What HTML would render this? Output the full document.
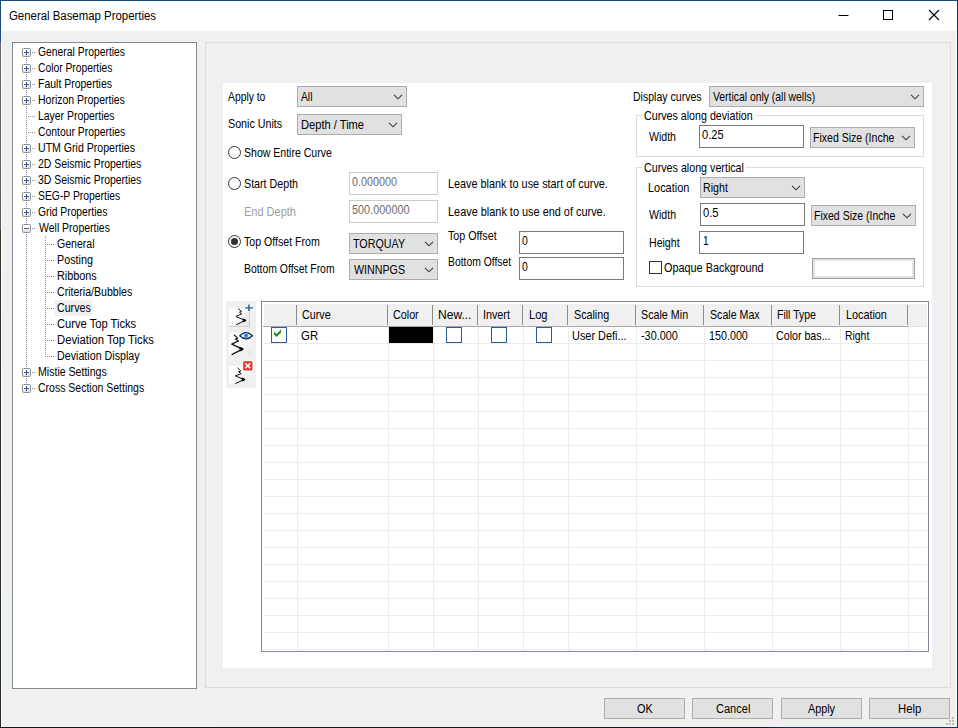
<!DOCTYPE html><html><head><meta charset="utf-8"><title>General Basemap Properties</title><style>
*{box-sizing:border-box;margin:0;padding:0}
html,body{width:958px;height:728px;overflow:hidden;background:#f0f0f0}
body{position:relative;font-family:"Liberation Sans",sans-serif;color:#000;font-size:13px}
.a{position:absolute}
.t{position:absolute;white-space:nowrap;transform-origin:0 50%;line-height:16px;height:16px}
.dd{position:absolute;background:#e1e1e1;border:1px solid #adadad}
.tb{position:absolute;background:#fff;border:1px solid #7a7a7a}
.tbd{position:absolute;background:#fff;border:1px solid #cccccc}
.btn{position:absolute;background:#e1e1e1;border:1px solid #adadad}
.grp{position:absolute;border:1px solid #dcdcdc}
.rad{position:absolute;width:13px;height:13px;border:1px solid #333;border-radius:50%;background:#fff}
.cb{position:absolute;border:1px solid #333;background:#fff}
.pm{position:absolute;width:9px;height:9px;border:1px solid #8e8e8e;border-radius:1.5px;background:linear-gradient(#fff,#fff 50%,#d8d8d8)}
.pm i{position:absolute;left:1px;top:3px;width:5px;height:1px;background:#3c50a0}
.pm b{position:absolute;left:3px;top:1px;width:1px;height:5px;background:#3c50a0}
.hv{position:absolute;top:305px;width:1px;height:20px;background:#8c8c8c}
.gc{position:absolute;width:16px;height:16px;top:327px;background:#fff;border:1px solid #2b5c9e}
</style></head><body>
<div class="a" style="left:0px;top:0px;width:958px;height:31px;background:#fff"></div>
<div class="a" style="left:0px;top:0px;width:958px;height:1px;background:#1b4b70"></div>
<div class="a" style="left:0px;top:0px;width:1px;height:728px;background:linear-gradient(#1b4a7a 0,#1b4a7a 42px,#6a6a6a 42px,#5a5a5a 230px,#303830 231px,#1c2a24 100%)"></div>
<div class="a" style="left:1px;top:31px;width:1px;height:696px;background:#fff"></div>
<div class="a" style="left:956px;top:1px;width:1px;height:726px;background:#fff"></div>
<div class="a" style="left:957px;top:0px;width:1px;height:728px;background:#16305c"></div>
<div class="a" style="left:0px;top:727px;width:958px;height:1px;background:linear-gradient(90deg,#14141c 0,#1a1424 80%,#16305c 82%)"></div>
<div class="t" style="left:8.93px;top:8px;font-size:12px;transform:scaleX(0.9500);">General Basemap Properties</div>
<svg class="a" style="left:830px;top:1px" width="126" height="30" viewBox="0 0 126 30"><path d="M8.5 14.5h10" stroke="#000" stroke-width="1" fill="none"/><rect x="53.5" y="9.5" width="9" height="9" stroke="#000" stroke-width="1" fill="none"/><path d="M99 9l10 10M109 9l-10 10" stroke="#000" stroke-width="1.1" fill="none"/></svg>
<div class="a" style="left:12px;top:42px;width:185px;height:647px;background:#fff;border:1px solid #828790"></div>
<div class="a" style="left:26px;top:52px;width:1px;height:337px;background-image:linear-gradient(#909090 50%,transparent 50%);background-size:1px 2px"></div>
<div class="a" style="left:45px;top:236px;width:1px;height:121px;background-image:linear-gradient(#909090 50%,transparent 50%);background-size:1px 2px"></div>
<div class="a" style="left:32px;top:52px;width:3px;height:1px;background-image:linear-gradient(90deg,#909090 50%,transparent 50%);background-size:2px 1px"></div>
<div class="pm" style="left:22px;top:48px;width:9px;height:9px;"><i></i><b></b></div>
<div class="t" style="left:38.17px;top:44px;font-size:12px;transform:scaleX(0.8642);">General Properties</div>
<div class="a" style="left:32px;top:68px;width:3px;height:1px;background-image:linear-gradient(90deg,#909090 50%,transparent 50%);background-size:2px 1px"></div>
<div class="pm" style="left:22px;top:64px;width:9px;height:9px;"><i></i><b></b></div>
<div class="t" style="left:38.17px;top:60px;font-size:12px;transform:scaleX(0.8571);">Color Properties</div>
<div class="a" style="left:32px;top:84px;width:3px;height:1px;background-image:linear-gradient(90deg,#909090 50%,transparent 50%);background-size:2px 1px"></div>
<div class="pm" style="left:22px;top:80px;width:9px;height:9px;"><i></i><b></b></div>
<div class="t" style="left:37.73px;top:76px;font-size:12px;transform:scaleX(0.8733);">Fault Properties</div>
<div class="a" style="left:32px;top:100px;width:3px;height:1px;background-image:linear-gradient(90deg,#909090 50%,transparent 50%);background-size:2px 1px"></div>
<div class="pm" style="left:22px;top:96px;width:9px;height:9px;"><i></i><b></b></div>
<div class="t" style="left:37.73px;top:92px;font-size:12px;transform:scaleX(0.8735);">Horizon Properties</div>
<div class="a" style="left:28px;top:116px;width:7px;height:1px;background-image:linear-gradient(90deg,#909090 50%,transparent 50%);background-size:2px 1px"></div>
<div class="t" style="left:37.73px;top:108px;font-size:12px;transform:scaleX(0.8692);">Layer Properties</div>
<div class="a" style="left:28px;top:132px;width:7px;height:1px;background-image:linear-gradient(90deg,#909090 50%,transparent 50%);background-size:2px 1px"></div>
<div class="t" style="left:38.17px;top:124px;font-size:12px;transform:scaleX(0.8662);">Contour Properties</div>
<div class="a" style="left:32px;top:148px;width:3px;height:1px;background-image:linear-gradient(90deg,#909090 50%,transparent 50%);background-size:2px 1px"></div>
<div class="pm" style="left:22px;top:144px;width:9px;height:9px;"><i></i><b></b></div>
<div class="t" style="left:37.72px;top:140px;font-size:12px;transform:scaleX(0.8811);">UTM Grid Properties</div>
<div class="a" style="left:32px;top:164px;width:3px;height:1px;background-image:linear-gradient(90deg,#909090 50%,transparent 50%);background-size:2px 1px"></div>
<div class="pm" style="left:22px;top:160px;width:9px;height:9px;"><i></i><b></b></div>
<div class="t" style="left:38.16px;top:156px;font-size:12px;transform:scaleX(0.8705);">2D Seismic Properties</div>
<div class="a" style="left:32px;top:180px;width:3px;height:1px;background-image:linear-gradient(90deg,#909090 50%,transparent 50%);background-size:2px 1px"></div>
<div class="pm" style="left:22px;top:176px;width:9px;height:9px;"><i></i><b></b></div>
<div class="t" style="left:38.16px;top:172px;font-size:12px;transform:scaleX(0.8705);">3D Seismic Properties</div>
<div class="a" style="left:32px;top:196px;width:3px;height:1px;background-image:linear-gradient(90deg,#909090 50%,transparent 50%);background-size:2px 1px"></div>
<div class="pm" style="left:22px;top:192px;width:9px;height:9px;"><i></i><b></b></div>
<div class="t" style="left:38.17px;top:188px;font-size:12px;transform:scaleX(0.8637);">SEG-P Properties</div>
<div class="a" style="left:32px;top:212px;width:3px;height:1px;background-image:linear-gradient(90deg,#909090 50%,transparent 50%);background-size:2px 1px"></div>
<div class="pm" style="left:22px;top:208px;width:9px;height:9px;"><i></i><b></b></div>
<div class="t" style="left:38.17px;top:204px;font-size:12px;transform:scaleX(0.8589);">Grid Properties</div>
<div class="a" style="left:32px;top:228px;width:3px;height:1px;background-image:linear-gradient(90deg,#909090 50%,transparent 50%);background-size:2px 1px"></div>
<div class="pm" style="left:22px;top:224px;width:9px;height:9px;"><i></i></div>
<div class="t" style="left:38.60px;top:220px;font-size:12px;transform:scaleX(0.8743);">Well Properties</div>
<div class="a" style="left:47px;top:244px;width:7px;height:1px;background-image:linear-gradient(90deg,#909090 50%,transparent 50%);background-size:2px 1px"></div>
<div class="t" style="left:57.16px;top:236px;font-size:12px;transform:scaleX(0.8795);">General</div>
<div class="a" style="left:47px;top:260px;width:7px;height:1px;background-image:linear-gradient(90deg,#909090 50%,transparent 50%);background-size:2px 1px"></div>
<div class="t" style="left:56.70px;top:252px;font-size:12px;transform:scaleX(0.8993);">Posting</div>
<div class="a" style="left:47px;top:276px;width:7px;height:1px;background-image:linear-gradient(90deg,#909090 50%,transparent 50%);background-size:2px 1px"></div>
<div class="t" style="left:56.70px;top:268px;font-size:12px;transform:scaleX(0.9035);">Ribbons</div>
<div class="a" style="left:47px;top:292px;width:7px;height:1px;background-image:linear-gradient(90deg,#909090 50%,transparent 50%);background-size:2px 1px"></div>
<div class="t" style="left:57.16px;top:284px;font-size:12px;transform:scaleX(0.8817);">Criteria/Bubbles</div>
<div class="a" style="left:47px;top:308px;width:7px;height:1px;background-image:linear-gradient(90deg,#909090 50%,transparent 50%);background-size:2px 1px"></div>
<div class="a" style="left:55px;top:300px;width:37px;height:16px;background:#f0f0f0"></div>
<div class="t" style="left:57.16px;top:300px;font-size:12px;transform:scaleX(0.8865);">Curves</div>
<div class="a" style="left:47px;top:324px;width:7px;height:1px;background-image:linear-gradient(90deg,#909090 50%,transparent 50%);background-size:2px 1px"></div>
<div class="t" style="left:57.14px;top:316px;font-size:12px;transform:scaleX(0.9294);">Curve Top Ticks</div>
<div class="a" style="left:47px;top:340px;width:7px;height:1px;background-image:linear-gradient(90deg,#909090 50%,transparent 50%);background-size:2px 1px"></div>
<div class="t" style="left:56.66px;top:332px;font-size:12px;transform:scaleX(0.9396);">Deviation Top Ticks</div>
<div class="a" style="left:47px;top:356px;width:7px;height:1px;background-image:linear-gradient(90deg,#909090 50%,transparent 50%);background-size:2px 1px"></div>
<div class="t" style="left:56.71px;top:348px;font-size:12px;transform:scaleX(0.8918);">Deviation Display</div>
<div class="a" style="left:32px;top:372px;width:3px;height:1px;background-image:linear-gradient(90deg,#909090 50%,transparent 50%);background-size:2px 1px"></div>
<div class="pm" style="left:22px;top:368px;width:9px;height:9px;"><i></i><b></b></div>
<div class="t" style="left:37.72px;top:364px;font-size:12px;transform:scaleX(0.8810);">Mistie Settings</div>
<div class="a" style="left:32px;top:388px;width:3px;height:1px;background-image:linear-gradient(90deg,#909090 50%,transparent 50%);background-size:2px 1px"></div>
<div class="pm" style="left:22px;top:384px;width:9px;height:9px;"><i></i><b></b></div>
<div class="t" style="left:38.16px;top:380px;font-size:12px;transform:scaleX(0.8747);">Cross Section Settings</div>
<div class="grp" style="left:205px;top:42px;width:746px;height:646px;"></div>
<div class="a" style="left:223px;top:83px;width:709px;height:585px;background:#fff"></div>
<div class="t" style="left:227.90px;top:89px;font-size:13px;transform:scaleX(0.7957);">Apply to</div>
<div class="dd" style="left:297px;top:86px;width:110px;height:21px;"></div>
<div class="t" style="left:301.40px;top:89px;font-size:13px;transform:scaleX(0.7900);">All</div>
<svg class="a" style="left:393px;top:94px" width="10" height="6" viewBox="0 0 10 6"><path d="M1 .9L5 4.8L9 .9" stroke="#3a3a3a" stroke-width="1.1" fill="none"/></svg>
<div class="t" style="left:227.68px;top:116px;font-size:13px;transform:scaleX(0.8233);">Sonic Units</div>
<div class="dd" style="left:297px;top:114px;width:105px;height:21px;"></div>
<div class="t" style="left:300.54px;top:117px;font-size:13px;transform:scaleX(0.8556);">Depth / Time</div>
<svg class="a" style="left:388px;top:122px" width="10" height="6" viewBox="0 0 10 6"><path d="M1 .9L5 4.8L9 .9" stroke="#3a3a3a" stroke-width="1.1" fill="none"/></svg>
<div class="rad" style="left:228px;top:146px;width:13px;height:13px;"></div>
<div class="t" style="left:243.79px;top:145px;font-size:13px;transform:scaleX(0.8103);">Show Entire Curve</div>
<div class="rad" style="left:228px;top:177px;width:13px;height:13px;"></div>
<div class="t" style="left:243.78px;top:176px;font-size:13px;transform:scaleX(0.8218);">Start Depth</div>
<div class="tbd" style="left:349px;top:172px;width:89px;height:23px;"></div>
<div class="t" style="left:351.88px;top:174px;font-size:13px;transform:scaleX(0.8319);color:#6d6d6d;">0.000000</div>
<div class="t" style="left:243.55px;top:204px;font-size:13px;transform:scaleX(0.8454);color:#a0a0a0;">End Depth</div>
<div class="tbd" style="left:349px;top:200px;width:89px;height:23px;"></div>
<div class="t" style="left:351.88px;top:202px;font-size:13px;transform:scaleX(0.8384);color:#6d6d6d;">500.000000</div>
<div class="t" style="left:447.57px;top:176px;font-size:13px;transform:scaleX(0.8349);">Leave blank to use start of curve.</div>
<div class="t" style="left:447.56px;top:204px;font-size:13px;transform:scaleX(0.8393);">Leave blank to use end of curve.</div>
<div class="rad" style="left:228px;top:235px;width:13px;height:13px;"><div class="a" style="left:2px;top:2px;width:7px;height:7px;border-radius:50%;background:#333"></div></div>
<div class="t" style="left:244.20px;top:234px;font-size:13px;transform:scaleX(0.8153);">Top Offset From</div>
<div class="dd" style="left:349px;top:233px;width:89px;height:21px;"></div>
<div class="t" style="left:353.39px;top:236px;font-size:13px;transform:scaleX(0.8256);">TORQUAY</div>
<svg class="a" style="left:424px;top:241px" width="10" height="6" viewBox="0 0 10 6"><path d="M1 .9L5 4.8L9 .9" stroke="#3a3a3a" stroke-width="1.1" fill="none"/></svg>
<div class="t" style="left:243.60px;top:261px;font-size:13px;transform:scaleX(0.8000);">Bottom Offset From</div>
<div class="dd" style="left:349px;top:259px;width:89px;height:21px;"></div>
<div class="t" style="left:353.60px;top:262px;font-size:13px;transform:scaleX(0.8211);">WINNPGS</div>
<svg class="a" style="left:424px;top:267px" width="10" height="6" viewBox="0 0 10 6"><path d="M1 .9L5 4.8L9 .9" stroke="#3a3a3a" stroke-width="1.1" fill="none"/></svg>
<div class="t" style="left:448.19px;top:228px;font-size:13px;transform:scaleX(0.8238);">Top Offset</div>
<div class="tb" style="left:519px;top:231px;width:105px;height:23px;"></div>
<div class="t" style="left:522.10px;top:233px;font-size:13px;transform:scaleX(0.8000);">0</div>
<div class="t" style="left:447.60px;top:254px;font-size:13px;transform:scaleX(0.7974);">Bottom Offset</div>
<div class="tb" style="left:519px;top:257px;width:105px;height:23px;"></div>
<div class="t" style="left:522.10px;top:259px;font-size:13px;transform:scaleX(0.8000);">0</div>
<div class="t" style="left:632.79px;top:89px;font-size:13px;transform:scaleX(0.8120);">Display curves</div>
<div class="dd" style="left:709px;top:86px;width:215px;height:21px;"></div>
<div class="t" style="left:713.10px;top:89px;font-size:13px;transform:scaleX(0.7984);">Vertical only (all wells)</div>
<svg class="a" style="left:910px;top:94px" width="10" height="6" viewBox="0 0 10 6"><path d="M1 .9L5 4.8L9 .9" stroke="#3a3a3a" stroke-width="1.1" fill="none"/></svg>
<div class="grp" style="left:636px;top:115px;width:288px;height:42px;"></div>
<div class="a" style="left:642px;top:108px;width:113px;height:16px;background:#fff"></div>
<div class="t" style="left:643.98px;top:108px;font-size:13px;transform:scaleX(0.8214);">Curves along deviation</div>
<div class="t" style="left:648.60px;top:129px;font-size:13px;transform:scaleX(0.8123);">Width</div>
<div class="tb" style="left:699px;top:125px;width:105px;height:23px;"></div>
<div class="t" style="left:701.57px;top:127px;font-size:13px;transform:scaleX(0.8536);">0.25</div>
<div class="dd" style="left:810px;top:127px;width:105px;height:21px;"></div>
<div class="t" style="left:813.29px;top:130px;font-size:13px;transform:scaleX(0.8101);">Fixed Size (Inche</div>
<svg class="a" style="left:901px;top:135px" width="10" height="6" viewBox="0 0 10 6"><path d="M1 .9L5 4.8L9 .9" stroke="#3a3a3a" stroke-width="1.1" fill="none"/></svg>
<div class="grp" style="left:636px;top:167px;width:288px;height:120px;"></div>
<div class="a" style="left:642px;top:160px;width:104px;height:16px;background:#fff"></div>
<div class="t" style="left:643.98px;top:160px;font-size:13px;transform:scaleX(0.8234);">Curves along vertical</div>
<div class="t" style="left:648.36px;top:180px;font-size:13px;transform:scaleX(0.8402);">Location</div>
<div class="dd" style="left:700px;top:177px;width:105px;height:21px;"></div>
<div class="t" style="left:703.18px;top:180px;font-size:13px;transform:scaleX(0.8205);">Right</div>
<svg class="a" style="left:791px;top:185px" width="10" height="6" viewBox="0 0 10 6"><path d="M1 .9L5 4.8L9 .9" stroke="#3a3a3a" stroke-width="1.1" fill="none"/></svg>
<div class="t" style="left:649.40px;top:207px;font-size:13px;transform:scaleX(0.8154);">Width</div>
<div class="tb" style="left:700px;top:203px;width:105px;height:23px;"></div>
<div class="t" style="left:702.57px;top:205px;font-size:13px;transform:scaleX(0.8647);">0.5</div>
<div class="dd" style="left:811px;top:205px;width:105px;height:21px;"></div>
<div class="t" style="left:814.39px;top:208px;font-size:13px;transform:scaleX(0.8091);">Fixed Size (Inche</div>
<svg class="a" style="left:902px;top:213px" width="10" height="6" viewBox="0 0 10 6"><path d="M1 .9L5 4.8L9 .9" stroke="#3a3a3a" stroke-width="1.1" fill="none"/></svg>
<div class="t" style="left:648.59px;top:235px;font-size:13px;transform:scaleX(0.8137);">Height</div>
<div class="tb" style="left:699px;top:231px;width:105px;height:23px;"></div>
<div class="t" style="left:702.71px;top:233px;font-size:13px;transform:scaleX(0.7900);">1</div>
<div class="cb" style="left:649px;top:261px;width:13px;height:13px;"></div>
<div class="t" style="left:663.98px;top:260px;font-size:13px;transform:scaleX(0.8356);">Opaque Background</div>
<div class="a" style="left:812px;top:258px;width:103px;height:21px;background:#fff;border:1px solid #a0a0a0;box-shadow:inset 0 0 0 2px #e3e3e3"></div>
<div class="a" style="left:226px;top:301px;width:30px;height:87px;background:#f0f0f0"></div>
<div class="a" style="left:229.3px;top:307.6px;width:20.4px;height:19.1px;background:linear-gradient(135deg,#ffffff 35%,#e4e4e4);border-right:1px solid #d0d0d0;border-bottom:1px solid #d0d0d0"></div>
<div class="a" style="left:229.4px;top:333.3px;width:22.7px;height:21.7px;background:linear-gradient(135deg,#ffffff 35%,#e8e8e8)"></div>
<div class="a" style="left:229.4px;top:366.3px;width:18.6px;height:17.7px;background:linear-gradient(135deg,#ffffff 35%,#e8e8e8)"></div>
<svg class="a" style="left:226px;top:301px" width="30" height="87" viewBox="226 301 30 87"><path d="M238.2 308.5L241.5 311.5L239.5 312.2L241.8 313.8L235.9 316.5L245.4 320.4L236.2 324.7" stroke="#111" stroke-width="1" fill="none" stroke-linejoin="round"/><path d="M242.6 319.2L245.4 320.4L242.8 321.6" stroke="#000" stroke-width="1.7" fill="none" stroke-linejoin="round"/><path d="M234 334.6L237.6 338.2L235.3 339.1L238.5 341L231.7 344.1L242.6 349.1L231.7 354.6" stroke="#111" stroke-width="1.2" fill="none" stroke-linejoin="round"/><path d="M239.4 347.6L242.6 349.1L239.6 350.6" stroke="#000" stroke-width="2" fill="none" stroke-linejoin="round"/><path d="M237.4 367.7L240.8 370.9L238.5 371.8L241.2 373.6L235.3 375.9L244.4 379.5L235.3 383.6" stroke="#111" stroke-width="1" fill="none" stroke-linejoin="round"/><path d="M241.8 378.4L244.4 379.5L241.9 380.6" stroke="#000" stroke-width="1.7" fill="none" stroke-linejoin="round"/><path d="M245.2 307.9H252.9M248.9 304.5V310.9" stroke="#2f5f7f" stroke-width="1.4" fill="none"/><path d="M239.8 335.7Q246.1 329.4 252.4 335.7Q246.1 342 239.8 335.7Z" fill="#fff" stroke="#12294a" stroke-width="1.25"/><circle cx="246.1" cy="335.7" r="2.3" fill="#3399ff"/><circle cx="246.1" cy="335.7" r="0.8" fill="#1a4f9a"/><rect x="243.2" y="361.2" width="9.2" height="9.2" rx="1" fill="#d93a30"/><path d="M245.3 363.3L250.3 368.3M250.3 363.3L245.3 368.3" stroke="#fff" stroke-width="1.6" fill="none"/></svg>
<div class="a" style="left:261px;top:301px;width:668px;height:351px;background:#fff;border:1px solid #7f8796"></div>
<div class="a" style="left:263px;top:343px;width:664px;height:1px;background:#ececec"></div>
<div class="a" style="left:263px;top:360px;width:664px;height:1px;background:#ececec"></div>
<div class="a" style="left:263px;top:377px;width:664px;height:1px;background:#ececec"></div>
<div class="a" style="left:263px;top:394px;width:664px;height:1px;background:#ececec"></div>
<div class="a" style="left:263px;top:411px;width:664px;height:1px;background:#ececec"></div>
<div class="a" style="left:263px;top:428px;width:664px;height:1px;background:#ececec"></div>
<div class="a" style="left:263px;top:445px;width:664px;height:1px;background:#ececec"></div>
<div class="a" style="left:263px;top:462px;width:664px;height:1px;background:#ececec"></div>
<div class="a" style="left:263px;top:479px;width:664px;height:1px;background:#ececec"></div>
<div class="a" style="left:263px;top:496px;width:664px;height:1px;background:#ececec"></div>
<div class="a" style="left:263px;top:513px;width:664px;height:1px;background:#ececec"></div>
<div class="a" style="left:263px;top:530px;width:664px;height:1px;background:#ececec"></div>
<div class="a" style="left:263px;top:547px;width:664px;height:1px;background:#ececec"></div>
<div class="a" style="left:263px;top:564px;width:664px;height:1px;background:#ececec"></div>
<div class="a" style="left:263px;top:581px;width:664px;height:1px;background:#ececec"></div>
<div class="a" style="left:263px;top:598px;width:664px;height:1px;background:#ececec"></div>
<div class="a" style="left:263px;top:615px;width:664px;height:1px;background:#ececec"></div>
<div class="a" style="left:263px;top:632px;width:664px;height:1px;background:#ececec"></div>
<div class="a" style="left:263px;top:649px;width:664px;height:1px;background:#ececec"></div>
<div class="a" style="left:297px;top:327px;width:1px;height:324px;background:#ececec"></div>
<div class="a" style="left:388px;top:327px;width:1px;height:324px;background:#ececec"></div>
<div class="a" style="left:433px;top:327px;width:1px;height:324px;background:#ececec"></div>
<div class="a" style="left:478px;top:327px;width:1px;height:324px;background:#ececec"></div>
<div class="a" style="left:523px;top:327px;width:1px;height:324px;background:#ececec"></div>
<div class="a" style="left:568px;top:327px;width:1px;height:324px;background:#ececec"></div>
<div class="a" style="left:636px;top:327px;width:1px;height:324px;background:#ececec"></div>
<div class="a" style="left:704px;top:327px;width:1px;height:324px;background:#ececec"></div>
<div class="a" style="left:772px;top:327px;width:1px;height:324px;background:#ececec"></div>
<div class="a" style="left:840px;top:327px;width:1px;height:324px;background:#ececec"></div>
<div class="a" style="left:908px;top:327px;width:1px;height:324px;background:#ececec"></div>
<div class="a" style="left:264px;top:304px;width:663px;height:22px;background:#f0f0f0"></div>
<div class="a" style="left:263px;top:326px;width:645px;height:1px;background:#a8a8a8"></div>
<div class="a" style="left:908px;top:326px;width:19px;height:1px;background:#e0e0e0"></div>
<div class="hv" style="left:296px"></div>
<div class="hv" style="left:387px"></div>
<div class="hv" style="left:432px"></div>
<div class="hv" style="left:477px"></div>
<div class="hv" style="left:522px"></div>
<div class="hv" style="left:567px"></div>
<div class="hv" style="left:635px"></div>
<div class="hv" style="left:703px"></div>
<div class="hv" style="left:771px"></div>
<div class="hv" style="left:839px"></div>
<div class="hv" style="left:907px"></div>
<div class="t" style="left:302.08px;top:307px;font-size:13px;transform:scaleX(0.8271);">Curve</div>
<div class="t" style="left:392.88px;top:307px;font-size:13px;transform:scaleX(0.8267);">Color</div>
<div class="t" style="left:438.37px;top:307px;font-size:13px;transform:scaleX(0.9265);">New...</div>
<div class="t" style="left:482.96px;top:307px;font-size:13px;transform:scaleX(0.8288);">Invert</div>
<div class="t" style="left:528.55px;top:307px;font-size:13px;transform:scaleX(0.8506);">Log</div>
<div class="t" style="left:573.68px;top:307px;font-size:13px;transform:scaleX(0.8244);">Scaling</div>
<div class="t" style="left:641.38px;top:307px;font-size:13px;transform:scaleX(0.8252);">Scale Min</div>
<div class="t" style="left:709.69px;top:307px;font-size:13px;transform:scaleX(0.8184);">Scale Max</div>
<div class="t" style="left:777.39px;top:307px;font-size:13px;transform:scaleX(0.8086);">Fill Type</div>
<div class="t" style="left:845.57px;top:307px;font-size:13px;transform:scaleX(0.8317);">Location</div>
<div class="gc" style="left:271px"></div>
<svg class="a" style="left:273px;top:328px" width="10" height="11" viewBox="273 328 10 11"><path d="M274 331.5L276.5 334L281 329.5V332.5L276.5 337L274 334.5Z" fill="#1e8c1e"/></svg>
<div class="t" style="left:301.34px;top:328px;font-size:13px;transform:scaleX(0.8778);">GR</div>
<div class="a" style="left:389px;top:327px;width:44px;height:16px;background:#000"></div>
<div class="gc" style="left:446px"></div>
<div class="gc" style="left:491px"></div>
<div class="gc" style="left:536px"></div>
<div class="t" style="left:572.46px;top:328px;font-size:13px;transform:scaleX(0.8398);">User Defi...</div>
<div class="t" style="left:640.58px;top:328px;font-size:13px;transform:scaleX(0.8372);">-30.000</div>
<div class="t" style="left:709.47px;top:328px;font-size:13px;transform:scaleX(0.8264);">150.000</div>
<div class="t" style="left:776.08px;top:328px;font-size:13px;transform:scaleX(0.8202);">Color bas...</div>
<div class="t" style="left:844.80px;top:328px;font-size:13px;transform:scaleX(0.8000);">Right</div>
<div class="btn" style="left:604px;top:698px;width:81px;height:21px;"></div>
<div class="t" style="left:637.05px;top:701px;font-size:12px;transform:scaleX(0.9091);">OK</div>
<div class="btn" style="left:692px;top:698px;width:81px;height:21px;"></div>
<div class="t" style="left:715.94px;top:701px;font-size:12px;transform:scaleX(0.9194);">Cancel</div>
<div class="btn" style="left:781px;top:698px;width:81px;height:21px;"></div>
<div class="t" style="left:807.80px;top:701px;font-size:12px;transform:scaleX(0.9000);">Apply</div>
<div class="btn" style="left:869px;top:698px;width:81px;height:21px;"></div>
<div class="t" style="left:897.56px;top:701px;font-size:12px;transform:scaleX(0.9419);">Help</div>
<div class="a" style="left:952px;top:723px;width:2px;height:2px;background:#bcbcbc"></div>
<div class="a" style="left:949px;top:723px;width:2px;height:2px;background:#bcbcbc"></div>
<div class="a" style="left:946px;top:723px;width:2px;height:2px;background:#bcbcbc"></div>
<div class="a" style="left:952px;top:720px;width:2px;height:2px;background:#bcbcbc"></div>
<div class="a" style="left:949px;top:720px;width:2px;height:2px;background:#bcbcbc"></div>
<div class="a" style="left:952px;top:717px;width:2px;height:2px;background:#bcbcbc"></div>
</body></html>
